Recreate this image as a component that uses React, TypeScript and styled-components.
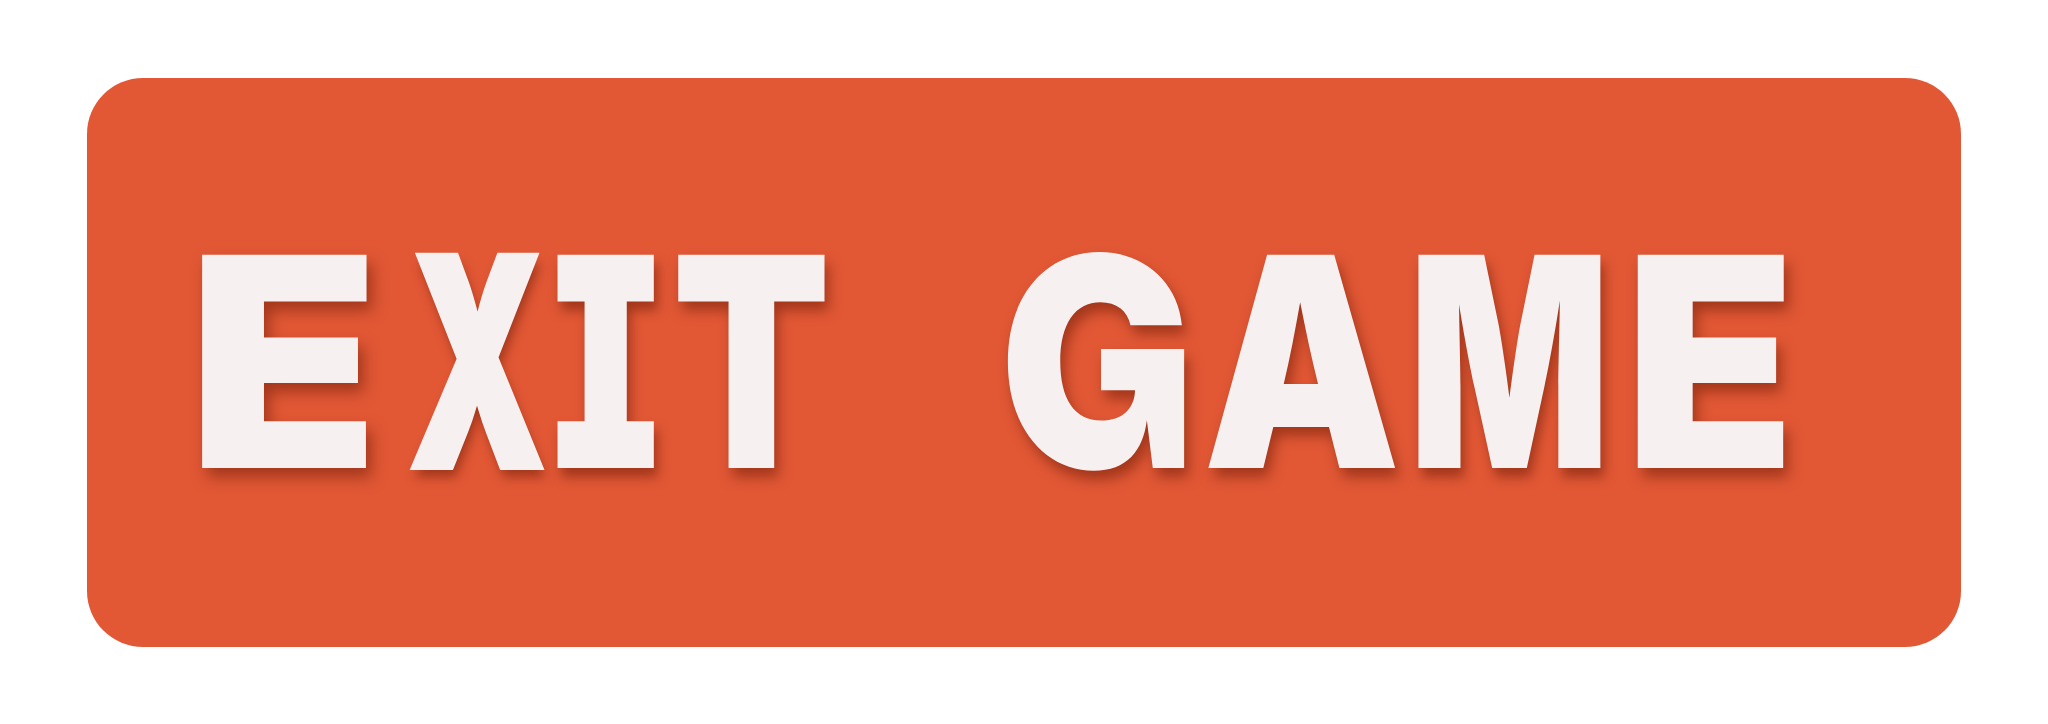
import { createGlobalStyle } from "styled-components";
import styled from "styled-components";

const GlobalStyle = createGlobalStyle`
  html, body {
    margin: 0;
    padding: 0;
    background: #ffffff;
  }
`;

const Page = styled.div`
  width: 2048px;
  height: 724px;
  display: flex;
  align-items: center;
  justify-content: center;
`;

const ExitButton = styled.button`
  width: 1874px;
  height: 569px;
  border: none;
  border-radius: 56px;
  background: #e25835;
  padding: 0 0 2px 100px;
  display: flex;
  align-items: center;
  justify-content: flex-start;
  cursor: pointer;
`;

const Label = styled.span`
  display: flex;
  font-family: Inter, "Noto Sans", sans-serif;
  font-weight: 900;
  font-size: 293px;
  line-height: 1;
  color: #f6f0f0;
  font-feature-settings: "cv08", "cv10";
  text-shadow: 5px 9px 14px rgba(110, 28, 8, 0.55);
`;

// each letter sits in its own cell; $sx narrows the glyph to the
// condensed proportions of the original lettering, $dx nudges it
const Glyph = styled.span<{ $w: number; $sx: number; $dx: number; $bold: number }>`
  display: inline-block;
  width: ${(p) => p.$w}px;
  text-align: center;
  white-space: pre;
  transform: translateX(${(p) => p.$dx}px) scaleX(${(p) => p.$sx});
  transform-origin: center;
  -webkit-text-stroke: ${(p) => p.$bold}px #f6f0f0;
`;

const letters: [string, number, number, number, number][] = [
  ["E", 193, 1.07, 0, 0],
  ["X", 160, 0.6, -4, 4],
  ["I", 129.4, 0.73, -6, 0],
  ["T", 161.2, 0.79, -14, 0],
  [" ", 164.4, 1, 0, 0],
  ["G", 201, 0.88, -8, 0],
  ["A", 210, 0.85, -9, 0],
  ["M", 204, 0.72, -26, 0],
  ["E", 200, 0.95, 0, 0],
];

const App = () => {
  return (
    <>
      <GlobalStyle />
      <Page>
        <ExitButton>
          <Label>
            {letters.map(([ch, w, sx, dx, bold], idx) => (
              <Glyph key={idx} $w={w} $sx={sx} $dx={dx} $bold={bold}>
                {ch}
              </Glyph>
            ))}
          </Label>
        </ExitButton>
      </Page>
    </>
  );
};

export default App;
